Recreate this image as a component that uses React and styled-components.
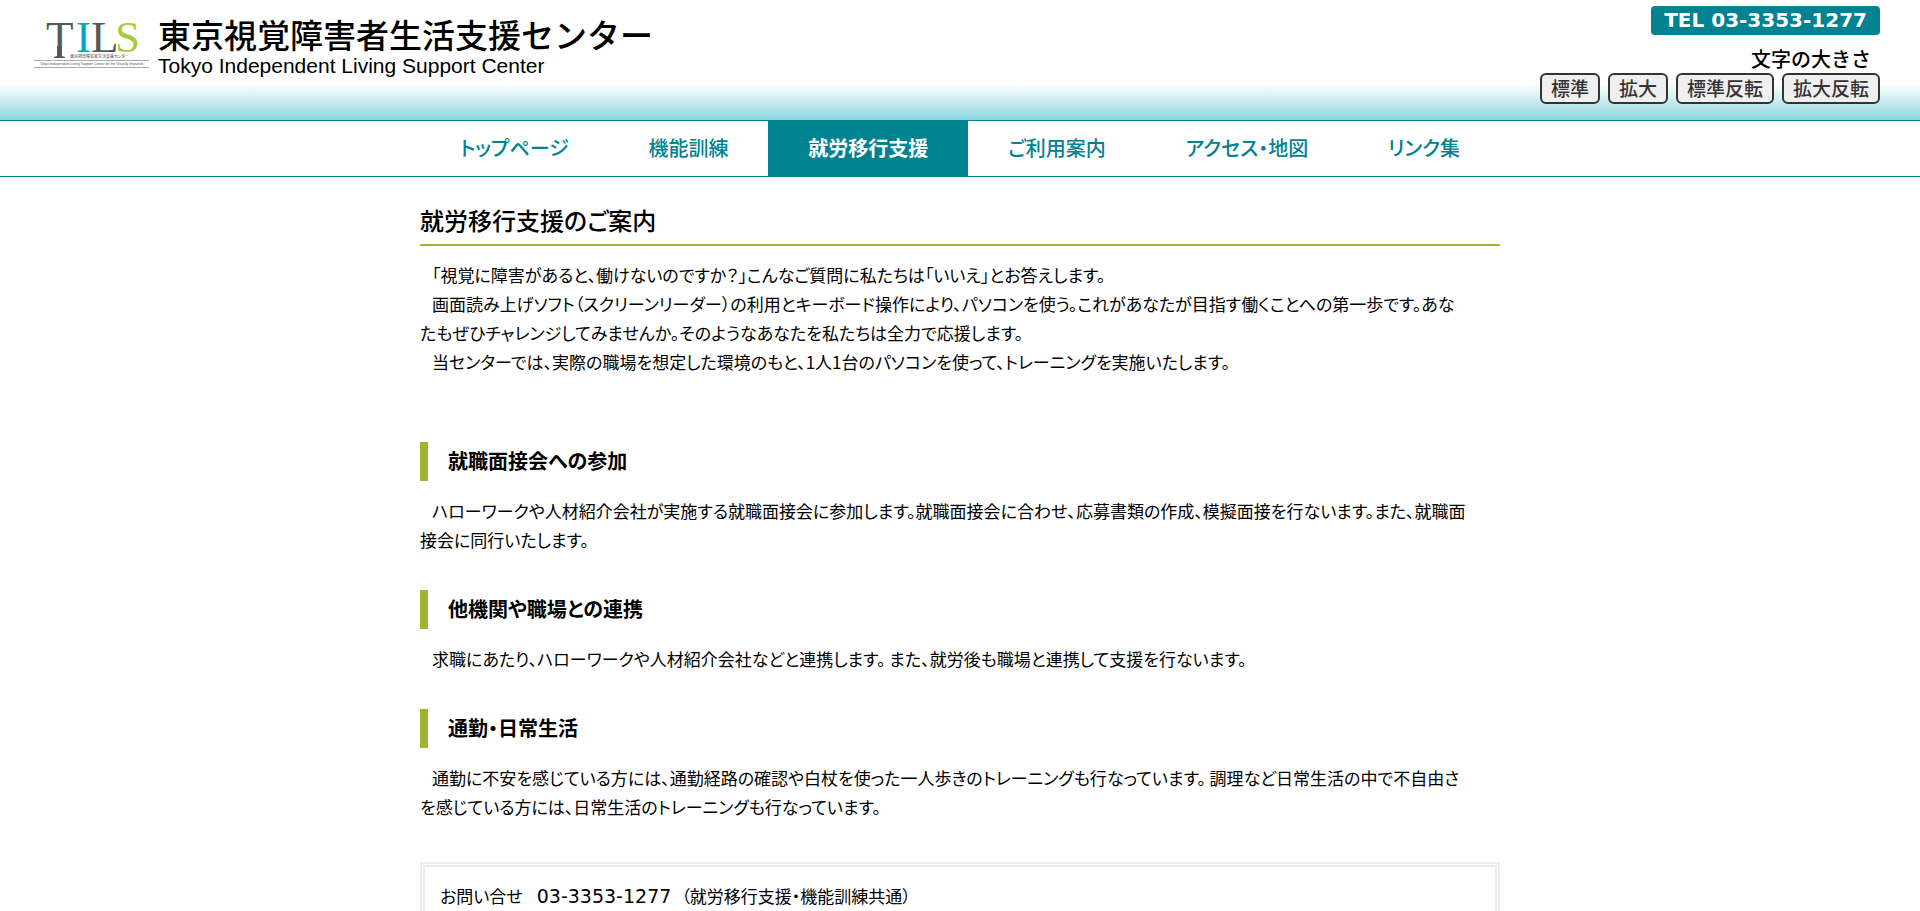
import { useState } from "react";
import styled, { createGlobalStyle } from "styled-components";

const GlobalStyle = createGlobalStyle`
  * {
    box-sizing: border-box;
  }
  body {
    margin: 0;
    background: #fff;
    color: #000;
    font-family: "Noto Sans CJK JP", sans-serif;
    font-size: 17px;
    font-feature-settings: "palt";
  }
  h1, h2, h3, p, ul {
    margin: 0;
    padding: 0;
  }
`;

const Page = styled.div`
  height: 100vh;
  overflow-y: auto;
  scrollbar-width: none;
`;

const Header = styled.header`
  display: flex;
  justify-content: space-between;
  height: 121px;
  padding: 6px 40px 0 34px;
  border-bottom: 1px solid #008291;
  background: linear-gradient(to bottom, #fff 84px, #8dd6e2 120px);
`;

const Brand = styled.a`
  display: flex;
  gap: 9px;
  padding-top: 10px;
  color: #000;
  text-decoration: none;
  svg {
    overflow: visible;
  }
`;

const SiteName = styled.h1`
  display: flex;
  flex-direction: column;
  font-size: 33px;
  font-weight: 500;
  line-height: 37px;
  font-feature-settings: normal;
  span {
    font-family: "Liberation Sans", sans-serif;
    font-size: 21px;
    font-weight: 400;
    line-height: 26px;
  }
`;

const Tools = styled.div`
  display: flex;
  flex-direction: column;
  align-items: flex-end;
`;

const Tel = styled.p`
  padding: 0 13px;
  border-radius: 4px;
  background: #008291;
  color: #fff;
  font-family: "DejaVu Sans", sans-serif;
  font-size: 20px;
  font-weight: 700;
  line-height: 29px;
`;

const SizeLabel = styled.p`
  padding: 10px 9px 0 0;
  font-size: 20px;
  font-weight: 500;
  line-height: 28px;
  font-feature-settings: normal;
`;

const SizeButtons = styled.div`
  display: flex;
  gap: 8px;
  button {
    cursor: pointer;
    height: 31px;
    padding: 0 9px 1px;
    border: 2px solid #333;
    border-radius: 6px;
    background: #efefef;
    color: #333;
    font-family: inherit;
    font-size: 19px;
    font-weight: 500;
    line-height: 26px;
  }
`;

const Nav = styled.nav`
  border-bottom: 1px solid #008291;
  ul {
    display: flex;
    max-width: 1080px;
    margin: 0 auto;
    list-style: none;
  }
  li {
    flex: auto;
  }
`;

const NavLink = styled.a`
  display: block;
  padding-bottom: 2px;
  background: ${({ $active }) => ($active ? "#008291" : "#fff")};
  color: ${({ $active }) => ($active ? "#fff" : "#008291")};
  font-size: 20px;
  font-weight: ${({ $active }) => ($active ? 700 : 500)};
  line-height: 53px;
  text-align: center;
  text-decoration: none;
`;

const Main = styled.main`
  max-width: 1080px;
  margin: 0 auto;
  padding: 23px 0 40px;
`;

const Title = styled.h2`
  margin-bottom: 14px;
  padding-bottom: 4px;
  border-bottom: 2px solid #9eb52f;
  font-size: 24px;
  font-weight: 500;
  line-height: 40px;
`;

const Text = styled.p`
  padding-right: 32px;
  line-height: 29px;
  text-indent: 12px;
`;

const Intro = styled.div`
  margin-bottom: 66px;
`;

const Section = styled.section`
  margin-bottom: 36px;
`;

const SubTitle = styled.h3`
  margin-bottom: 15px;
  padding: 0 0 2px 20px;
  border-left: 8px solid #9eb52f;
  font-size: 20px;
  font-weight: 700;
  line-height: 37px;
`;

const Contact = styled.div`
  margin-top: 41px;
  padding: 14px 15px;
  border: 5px double #ececec;
  line-height: 29px;
`;

const Number = styled.span`
  margin: 0 10px 0 14px;
  font-family: "DejaVu Sans", sans-serif;
  font-size: 19px;
`;

const navItems = [
  "トップページ",
  "機能訓練",
  "就労移行支援",
  "ご利用案内",
  "アクセス・地図",
  "リンク集",
];

const sizes = ["標準", "拡大", "標準反転", "拡大反転"];

const intro = [
  "「視覚に障害があると、働けないのですか？」こんなご質問に私たちは「いいえ」とお答えします。",
  "画面読み上げソフト（スクリーンリーダー）の利用とキーボード操作により、パソコンを使う。これがあなたが目指す働くことへの第一歩です。あなたもぜひチャレンジしてみませんか。そのようなあなたを私たちは全力で応援します。",
  "当センターでは、実際の職場を想定した環境のもと、1人1台のパソコンを使って、トレーニングを実施いたします。",
];

const sections = [
  {
    title: "就職面接会への参加",
    text: "ハローワークや人材紹介会社が実施する就職面接会に参加します。就職面接会に合わせ、応募書類の作成、模擬面接を行ないます。また、就職面接会に同行いたします。",
  },
  {
    title: "他機関や職場との連携",
    text: "求職にあたり、ハローワークや人材紹介会社などと連携します。 また、就労後も職場と連携して支援を行ないます。",
  },
  {
    title: "通勤・日常生活",
    text: "通勤に不安を感じている方には、通勤経路の確認や白杖を使った一人歩きのトレーニングも行なっています。 調理など日常生活の中で不自由さを感じている方には、日常生活のトレーニングも行なっています。",
  },
];

const Logo = () => (
  <svg width="115" height="56" viewBox="0 0 115 56" aria-hidden="true">
    <g fontFamily="Liberation Serif, serif" fontSize="45">
      <text x="12" y="36" fill="#595757">T</text>
      {/* the stem of the T runs on below the other letters */}
      <path d="M17 33H23V37H17zM28 33H34V37H28z" fill="#fff" />
      <path d="M23 30H28V40L31 41V42H20V41L23 40z" fill="#595757" />
      <text x="42" y="36" fill="#00a9c4">I</text>
      <text x="57" y="36" fill="#595757">L</text>
      <text x="81" y="36" fill="#a5cc3b">S</text>
    </g>
    <text x="36" y="42" fontSize="4" fontFamily="Noto Sans CJK JP, sans-serif" fill="#444">
      東京視覚障害者生活支援センター
    </text>
    <path d="M0 44.5H115M0 51.5H115" stroke="#aaa" />
    <text x="6" y="49" fontSize="3.5" fontFamily="Liberation Sans, sans-serif" fill="#555">
      Tokyo Independent Living Support Center for the Visually Impaired
    </text>
  </svg>
);

const App = () => {
  const [current, setCurrent] = useState("就労移行支援");
  return (
    <Page>
      <GlobalStyle />
      <Header>
        <Brand href="#top">
          <Logo />
          <SiteName>
            東京視覚障害者生活支援センター
            <span>Tokyo Independent Living Support Center</span>
          </SiteName>
        </Brand>
        <Tools>
          <Tel>TEL 03-3353-1277</Tel>
          <SizeLabel id="size-label">文字の大きさ</SizeLabel>
          <SizeButtons role="group" aria-labelledby="size-label">
            {sizes.map((size) => (
              <button key={size} type="button">
                {size}
              </button>
            ))}
          </SizeButtons>
        </Tools>
      </Header>
      <Nav>
        <ul>
          {navItems.map((item) => (
            <li key={item}>
              <NavLink
                href="#top"
                $active={item === current}
                onClick={() => setCurrent(item)}
              >
                {item}
              </NavLink>
            </li>
          ))}
        </ul>
      </Nav>
      <Main>
        <Title>就労移行支援のご案内</Title>
        <Intro>
          {intro.map((line) => (
            <Text key={line}>{line}</Text>
          ))}
        </Intro>
        {sections.map(({ title, text }) => (
          <Section key={title}>
            <SubTitle>{title}</SubTitle>
            <Text>{text}</Text>
          </Section>
        ))}
        <Contact>
          お問い合せ
          <Number>03-3353-1277</Number>
          （就労移行支援・機能訓練共通）
        </Contact>
      </Main>
    </Page>
  );
};

export default App;
